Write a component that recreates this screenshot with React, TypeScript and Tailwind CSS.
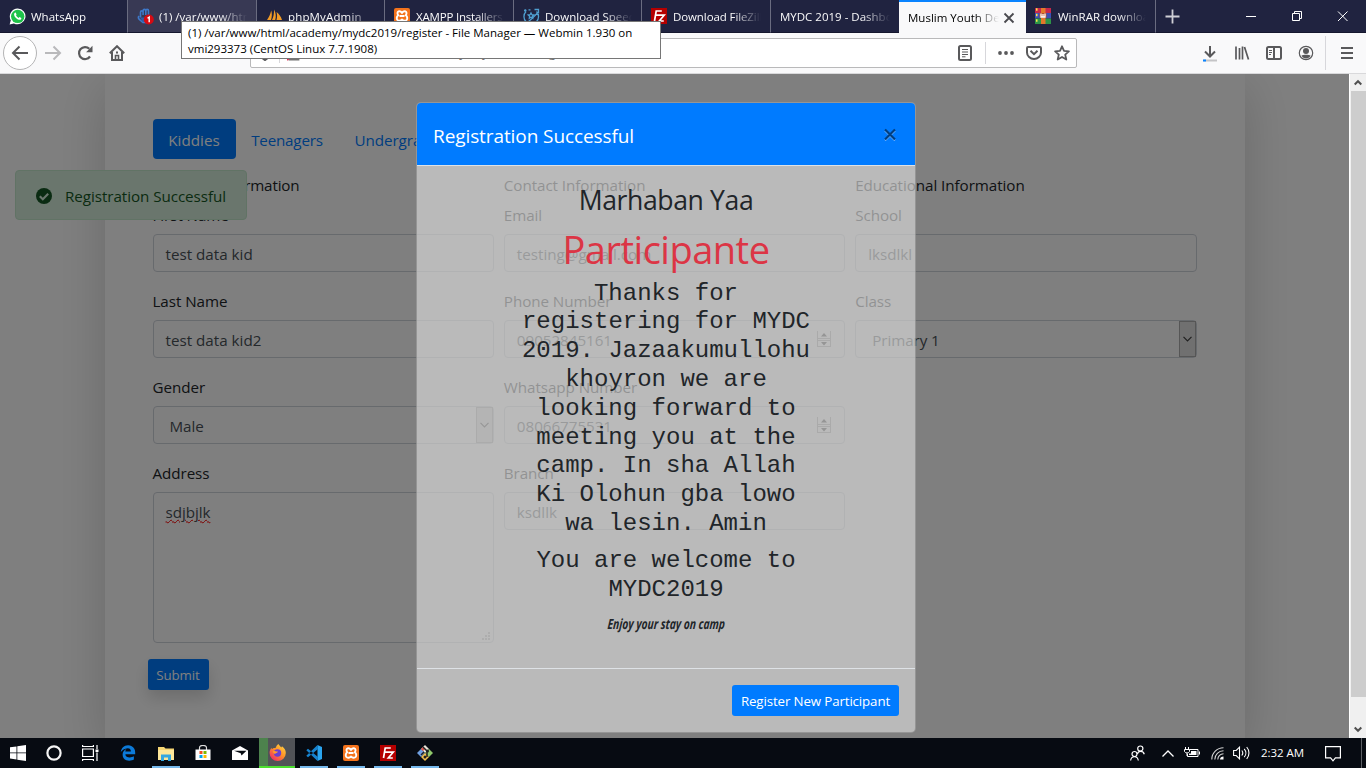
import React from "react";
import { FaEdgeLegacy } from "react-icons/fa";

const XamppIcon = ({ size }: { size: number }) => (
  <svg width={size} height={size} viewBox="0 0 16 16">
    <rect width="16" height="16" rx="2" fill="#f4731c" />
    <path
      d="M4.600 3.400c1.500-.7 2.500.3 3.400 1.400.9-1.100 1.900-2.100 3.400-1.400 1.600.8 1.300 2.500.4 3.900 1.500 1 1.900 3.400.9 4.600-1.200 1.300-3.300 1-4.700-.3-1.400 1.300-3.500 1.600-4.700.3-1-1.200-.6-3.600.9-4.600-.9-1.400-1.200-3.100.4-3.900z"
      fill="none"
      stroke="#fff"
      strokeWidth="1.900"
    />
    <path d="M5.500 8h5" stroke="#fff" strokeWidth="2" />
  </svg>
);

const FileZillaIcon = ({ size }: { size: number }) => (
  <svg width={size} height={size} viewBox="0 0 16 16">
    <rect width="16" height="16" fill="#b50000" />
    <path d="M3.500 13L5.200 3h5.600M4.400 7.200h4.300M8.200 7.200h5L8.300 13h4.500" fill="none" stroke="#fff" strokeWidth="1.700" />
  </svg>
);

const WhatsAppIcon = () => (
  <svg width="17" height="17" viewBox="0 0 17 17">
    <path d="M8.700 .5a7.900 7.900 0 1 1-3.800 14.900L.6 16.500l1.200-4.200A7.900 7.900 0 0 1 8.700.5z" fill="#fff" />
    <circle cx="8.700" cy="8.400" r="6.700" fill="#1fc24a" />
    <path d="M6 4.700c.5-.3.900 0 1.100.7l.4 1c.1.500-.6.900-.5 1.200.5 1 1.400 1.800 2.500 2.300.4.1.8-1 1.200-.8l1.500.8c.4.300-.1 1.500-.8 1.800-1.800.8-5.900-2.100-6.300-5-.1-.8.300-1.700.9-2z" fill="#fff" />
  </svg>
);

const WebminIcon = () => (
  <svg width="17" height="17" viewBox="0 0 17 17">
    <path d="M3.500 9.500V4.200a1.300 1.300 0 0 1 2.600 0V7 2.700a1.300 1.300 0 0 1 2.700 0V7 2.700a1.300 1.300 0 0 1 2.700 0V9M2 8c-1 1-.8 2.400.3 3.300L6 14.500h5" fill="none" stroke="#3e78c9" strokeWidth="1.600" />
    <path d="M3 9.500h9L10 14H6z" fill="#2f5ea8" />
    <circle cx="11.800" cy="11.500" r="5" fill="#d70a12" />
    <path d="M10.500 10.300l1.700-1.200v5.200" fill="none" stroke="#fff" strokeWidth="1.400" />
  </svg>
);

const SailIcon = () => (
  <svg width="17" height="17" viewBox="0 0 17 17">
    <path d="M1 12C3 9 4.500 6 5.200 2.500c1 3 .8 6.500-.2 9.500zM6 12c1.500-3 2.200-6.500 2-10.500 2 3.500 2.300 7 1.200 10.500zM10.500 12c.8-3 .8-5 0-8 2.500 2 4.500 4.500 5.500 8z" fill="#f29b26" />
    <path d="M1 13.500h14" stroke="#b9b9b9" />
  </svg>
);

const SpeedIcon = () => (
  <svg width="17" height="17" viewBox="0 0 17 17" fill="none" stroke="#4f9fd0" strokeWidth="1.300">
    <path d="M13.500 3.500A7.300 7.300 0 1 1 3 3.500M5 14l4-3.500L15.500 4" />
    <path d="M8 5l.9 1.700 1.900.3-1.400 1.300.3 1.900L8 9.300l-1.700.9.3-1.900L5.200 7l1.900-.3z" />
    <path d="M11.500 1.500h4v4M1 2.500h2.500M2.300 1.200v2.600M5.500 1.800h2" />
  </svg>
);

const WinRarIcon = () => (
  <svg width="16" height="16" viewBox="0 0 16 16">
    <rect y="0" width="16" height="5" fill="#c6284a" />
    <rect y="5" width="16" height="5.500" fill="#3d50b4" />
    <rect y="10.500" width="16" height="5.500" fill="#2c9447" />
    <path d="M1 1.500h1.500M1 7h1.500M1 12.500h1.500" stroke="#ffe34d" strokeWidth="2.500" />
    <rect x="6" width="4.500" height="16" fill="#e3792a" />
    <rect x="4.500" y="5" width="7" height="5" rx="1" fill="#b5502a" />
    <path d="M6 5.500v3.500h4V5.500M8 6v3" stroke="#fff" strokeWidth="1.300" fill="none" />
  </svg>
);

type TabProps = {
  label: string;
  icon?: React.ReactNode;
  width: string;
  text?: string;
  first?: boolean;
  hover?: boolean;
};

const Tab = ({ label, icon, width, text = "", first, hover }: TabProps) => (
  <div
    className={`flex h-[33px] shrink-0 items-center overflow-hidden border-b border-b-[#15172e] pr-[9px] ${width} ${
      first ? "pl-[9px]" : "border-l border-l-[#6a6c80] pl-[9px]"
    } ${hover ? "bg-[#383954]" : ""}`}
  >
    {icon && <span className="mr-[5px] w-[17px] shrink-0">{icon}</span>}
    <span className={`min-w-0 flex-1 overflow-hidden whitespace-nowrap pt-0.5 text-[#f9f9fa] [mask-image:linear-gradient(to_right,#000_calc(100%_-_28px),transparent)] ${text}`}>
      {label}
    </span>
  </div>
);

const TabStrip = () => (
  <div className="flex h-[33px] bg-[#202340] text-[11.500px]">
    <Tab first width="w-[127px]" icon={<WhatsAppIcon />} label="WhatsApp" />
    <Tab hover width="w-[129px]" icon={<WebminIcon />} label="(1) /var/www/html/academy" />
    <Tab width="w-[128px]" icon={<SailIcon />} label="phpMyAdmin" text="tracking-[0.15px]" />
    <Tab width="w-[129px]" icon={<XamppIcon size={16} />} label="XAMPP Installers and" text="tracking-[-0.2px]" />
    <Tab width="w-[128px]" icon={<SpeedIcon />} label="Download Speed Test" />
    <Tab width="w-[129px]" icon={<FileZillaIcon size={16} />} label="Download FileZilla Client" text="tracking-[-0.1px]" />
    <Tab width="w-[129px]" label="MYDC 2019 - Dashboard" />
    <div className="flex h-[33px] w-[127px] shrink-0 items-center border-t-2 border-t-[#0a84ff] bg-[#f9f9fa] pb-0.5 pl-[9px] text-black">
      <span className="w-[91px] overflow-hidden whitespace-nowrap pt-0.5 [mask-image:linear-gradient(to_right,#000_calc(100%_-_24px),transparent)]">
        Muslim Youth Development
      </span>
      <svg className="ml-1 mt-0.5" width="12" height="12" viewBox="0 0 12 12">
        <path d="M1.500 1.500l9 9M10.500 1.500l-9 9" stroke="#4a4a4f" strokeWidth="1.800" />
      </svg>
    </div>
    <Tab first width="w-[129px]" icon={<WinRarIcon />} label="WinRAR download free" text="pl-px" />
    <div className="flex h-[33px] w-[73px] shrink-0 items-center border-b border-l border-b-[#15172e] border-l-[#6a6c80] pl-[9px]">
      <svg width="15" height="15" viewBox="0 0 15 15">
        <path d="M7.500 .5v14M.5 7.500h14" stroke="#cfcfd6" strokeWidth="1.800" />
      </svg>
    </div>
    {["M0 5.500h10", "M.5 2.500h7v7h-7zM2.500 2.500v-2h7v7h-2", "M0 .5l9.500 9.500M9.500.5L0 10"].map((d) => (
      <div key={d} className="flex h-[33px] w-[46px] shrink-0 items-center justify-center border-b border-b-[#15172e]">
        <svg width="10" height="10" viewBox="0 0 10 10" fill="none" stroke="#fff" className="overflow-visible">
          <path d={d} />
        </svg>
      </div>
    ))}
  </div>
);

const Slot = ({ w = "w-8", children }: { w?: string; children: React.ReactNode }) => (
  <div className={`flex h-7 shrink-0 items-center justify-center ${w}`}>{children}</div>
);

const stroke = { fill: "none", stroke: "#59595b", strokeWidth: 2 } as const;

const NavBar = () => (
  <div className="flex h-[41px] items-center border-b border-b-[#d9d9db] bg-[#f9f9fa] pl-[3px]">
    <div className="flex size-[34px] shrink-0 items-center justify-center rounded-full border border-[#b4b4b5] bg-white">
      <svg width="18" height="16" viewBox="0 0 18 16" {...stroke}>
        <path d="M17 8H2M8.500 1.500L2 8l6.500 6.500" />
      </svg>
    </div>
    <Slot>
      <svg width="18" height="16" viewBox="0 0 18 16" {...stroke} stroke="#b9b9bb">
        <path d="M1 8h15M9.500 1.500L16 8l-6.500 6.500" />
      </svg>
    </Slot>
    <Slot>
      <svg width="16" height="16" viewBox="0 0 16 16" {...stroke} strokeWidth="2.200">
        <path d="M13 11.500A6 6 0 1 1 12.300 3.800" />
        <path d="M15.500.8v6.400H9.100z" fill="#59595b" stroke="none" />
      </svg>
    </Slot>
    <Slot>
      <svg width="16" height="16" viewBox="0 0 16 16" {...stroke}>
        <path d="M.8 8.300L8 1.200l7.200 7.100M3 7v7.900h10V7" />
        <path d="M6.500 15v-4.500h3V15" strokeWidth="1.600" />
        <path d="M7 6.500h2v2H7z" fill="#59595b" stroke="none" />
      </svg>
    </Slot>
    <div className="ml-[117px] flex h-[30px] w-[827px] shrink-0 items-center rounded-[2px] border border-[#b9b9ba] bg-white">
      <Slot w="w-7">
        <svg width="14" height="15" viewBox="0 0 14 15" {...stroke}>
          <path d="M7 1L1.500 3c0 6 1.500 9 5.500 11 4-2 5.500-5 5.500-11z" />
        </svg>
      </Slot>
      <div className="h-5 w-px bg-[#d7d7db]" />
      <Slot w="w-7">
        <svg className="mt-px" width="14" height="15" viewBox="0 0 14 15">
          <path d="M2.500 7h9v6.500h-9zM4.500 7V4.500a2.500 2.500 0 0 1 5 0V7" fill="none" stroke="#737373" strokeWidth="1.800" />
          <path d="M0 14L12 2" stroke="#e22850" strokeWidth="2" />
        </svg>
      </Slot>
      <div className="w-[643px] shrink-0 whitespace-nowrap pl-[16px] text-[12.800px] text-[#737373]">62.171.140.11/academy/mydc2019/register/</div>
      <Slot w="w-7">
        <svg width="14" height="16" viewBox="0 0 14 16" {...stroke}>
          <rect x="1" y="1" width="12" height="14" rx="1.500" />
          <path d="M4 4.500h6M4 7h6M4 9.500h6M4 11.800h3.500" strokeWidth="1" />
        </svg>
      </Slot>
      <div className="ml-[6px] mr-[6px] h-[22px] w-px bg-[#d7d7db]" />
      <Slot w="w-7">
        <svg width="16" height="4" viewBox="0 0 16 4" fill="#59595b">
          <circle cx="2" cy="2" r="1.900" />
          <circle cx="8" cy="2" r="1.900" />
          <circle cx="14" cy="2" r="1.900" />
        </svg>
      </Slot>
      <Slot w="w-7">
        <svg width="16" height="14" viewBox="0 0 16 14" {...stroke}>
          <path d="M2 1h12c.6 0 1 .4 1 1v4.500a7 6.500 0 0 1-14 0V2c0-.6.400-1 1-1z" />
          <path d="M4.500 4.800L8 8.200l3.500-3.400" />
        </svg>
      </Slot>
      <Slot w="w-7">
        <svg width="16" height="16" viewBox="0 0 16 16" {...stroke} strokeWidth="1.800" strokeLinejoin="round">
          <path d="M8 1.300l2 4.500 4.900.5-3.700 3.300 1.100 4.900L8 12l-4.300 2.500 1.100-4.900L1.100 6.300 6 5.800z" />
        </svg>
      </Slot>
    </div>
    <div className="ml-auto mr-[3px] flex items-center">
      <Slot>
        <svg width="16" height="17" viewBox="0 0 16 17" {...stroke}>
          <path d="M8 1v10M3 6.500l5 5 5-5" />
          <path d="M1.500 15.500H15" stroke="#c4c4c6" />
          <path d="M1 15.500h3" stroke="#0a84ff" />
        </svg>
      </Slot>
      <Slot>
        <svg width="16" height="14" viewBox="0 0 16 14" {...stroke}>
          <path d="M2 .5v13M5.500 2v11.500M8.500 .5v13M10.500 1l4 12.500" strokeWidth="1.700" />
        </svg>
      </Slot>
      <Slot>
        <svg width="16" height="14" viewBox="0 0 16 14" {...stroke}>
          <rect x="1" y="1" width="14" height="12" rx="1.500" />
          <path d="M8 1v12" />
          <path d="M3 4.500h3M3 6.500h3M3 8.500h2" strokeWidth="1" />
        </svg>
      </Slot>
      <Slot>
        <svg width="16" height="16" viewBox="0 0 16 16">
          <circle cx="8" cy="8" r="6.700" fill="none" stroke="#59595b" strokeWidth="1.200" />
          <circle cx="8" cy="6" r="3" fill="#59595b" />
          <path d="M3.500 10.500c1.500-1 7.500-1 9 0-1 2.300-2.500 3-4.500 3s-3.500-.7-4.500-3z" fill="#59595b" />
        </svg>
      </Slot>
      <div className="ml-[3px] mr-[5px] h-[34px] w-px bg-[#d7d7db]" />
      <Slot>
        <svg width="12" height="12" viewBox="0 0 12 12" {...stroke}>
          <path d="M0 1h12M0 6h12M0 11h12" />
        </svg>
      </Slot>
    </div>
  </div>
);

const box = "flex h-[38px] items-center rounded border border-[#ced4da] bg-white text-[#495057]";

const Field = ({ label, children }: { label: string; children: React.ReactNode }) => (
  <div className="mb-4">
    <div className="mb-1.5 h-[26px] leading-[26px]">{label}</div>
    {children}
  </div>
);

const TextBox = ({ value }: { value: string }) => <div className={`${box} px-3 pt-0.5 tracking-normal`}>{value}</div>;

const NumberBox = ({ value }: { value: string }) => (
  <div className={`${box} justify-between px-3`}>
    <span className="pt-0.5 tracking-[-0.03px]">{value}</span>
    <svg className="mr-px" width="14" height="16" viewBox="0 0 14 16">
      <path d="M.5 0v16M13.500 0v16M0 7.500h14M0 9.500h14M0 15.500h14" stroke="#a8a8a8" />
      <path d="M4 5.500L7 2l3 3.500zM4 11l3 3.500 3-3.500z" fill="#333" />
    </svg>
  </div>
);

const SelectBox = ({ value }: { value: string }) => (
  <div className={`${box} justify-between pl-4`}>
    <span className="pt-0.5">{value}</span>
    <span className="flex h-9 w-[17px] items-center justify-center border border-[#adadad] bg-[#e1e1e1]">
      <svg width="9" height="6" viewBox="0 0 9 6" fill="none" stroke="#404040" strokeWidth="1.200">
        <path d="M.5 .8l4 4 4-4" />
      </svg>
    </span>
  </div>
);

const Page = () => (
  <div className="relative h-full w-full overflow-hidden bg-white text-[15.200px] tracking-[-0.06px] text-[#212529]">
    <div className="mx-auto -mt-[3px] h-[667px] w-[1140px] bg-white p-12 shadow-[0_16px_48px_rgba(0,0,0,0.175)]">
      <div className="mb-[13px] flex h-10">
        <div className="flex w-[83px] items-center justify-center rounded bg-[#007bff] pt-[3px] tracking-[0.05px] text-white">Kiddies</div>
        <div className="flex w-[103px] items-center justify-center pt-[3px] tracking-[-0.2px] text-[#007bff]">Teenagers</div>
        <div className="flex items-center pl-4 pt-[3px] text-[#007bff]">Undergraduates</div>
      </div>
      <div className="grid grid-cols-3 gap-[10px]">
        <div>
          <div className="mb-1 h-[26px] leading-[26px] tracking-[-0.15px]">Personal Information</div>
          <Field label="First Name">
            <TextBox value="test data kid" />
          </Field>
          <Field label="Last Name">
            <TextBox value="test data kid2" />
          </Field>
          <Field label="Gender">
            <SelectBox value="Male" />
          </Field>
          <Field label="Address">
            <div className="relative h-[151px] rounded border border-[#ced4da] px-3 pt-[7px] leading-6 text-[#495057]">
              <span className="underline decoration-[#f00] decoration-wavy decoration-1 underline-offset-1">sdjbjlk</span>
              <svg className="absolute bottom-0.5 right-[3px]" width="8" height="8" viewBox="0 0 8 8" fill="#bbb">
                <path d="M6 0h2v2H6zM3 3h2v2H3zM6 3h2v2H6zM0 6h2v2H0zM3 6h2v2H3zM6 6h2v2H6z" />
              </svg>
            </div>
          </Field>
        </div>
        <div>
          <div className="mb-1 h-[26px] leading-[26px]">Contact Information</div>
          <Field label="Email">
            <TextBox value="testing@gmail.com" />
          </Field>
          <Field label="Phone Number">
            <NumberBox value="09052845161" />
          </Field>
          <Field label="Whatsapp Number">
            <NumberBox value="08066775531" />
          </Field>
          <Field label="Branch">
            <TextBox value="ksdllk" />
          </Field>
        </div>
        <div>
          <div className="mb-1 h-[26px] leading-[26px]">Educational Information</div>
          <Field label="School">
            <TextBox value="lksdlkl" />
          </Field>
          <Field label="Class">
            <SelectBox value="Primary 1" />
          </Field>
        </div>
      </div>
      <button className="-ml-[5px] block h-[31px] w-[61px] rounded-[3px] bg-[#007bff] pt-0.5 text-[13.300px] tracking-[-0.1px] text-white shadow-[0_8px_16px_rgba(0,0,0,0.15)]">
        Submit
      </button>
    </div>
  </div>
);

const Toast = () => (
  <div className="absolute left-[15px] top-[96px] flex h-[50px] w-[232px] items-center rounded border border-[#c3e6cb] bg-[#d4edda] pl-5 pt-0.5 text-[15.200px] tracking-[-0.06px] text-[#155724]">
    <svg width="16" height="16" viewBox="0 0 16 16">
      <circle cx="8" cy="8" r="8" fill="#155724" />
      <path d="M3.800 8.300l3 3 5.400-5.500" fill="none" stroke="#d4edda" strokeWidth="2.100" />
    </svg>
    <span className="ml-[13px] whitespace-nowrap">Registration Successful</span>
  </div>
);

const Modal = () => (
  <div className="absolute left-[416px] top-7 flex h-[631px] w-[500px] flex-col overflow-hidden rounded-[5px] border border-black/20 bg-[rgba(219,219,219,0.64)] text-[#212529]">
    <div className="flex h-[63px] shrink-0 items-center justify-between border-b border-[#dee2e6] bg-[#007bff] pl-4 pr-[19px] text-[19px] tracking-[-0.09px] text-white">
      <span className="pt-1">Registration Successful</span>
      <svg width="12" height="13" viewBox="0 0 12 13">
        <path d="M1 2.500l10 10M11 2.500l-10 10" stroke="#7fbdff" strokeWidth="1.800" />
        <path d="M1 1.500l10 10M11 1.500l-10 10" stroke="#003e80" strokeWidth="2.200" />
      </svg>
    </div>
    <div className="flex flex-1 flex-col items-center whitespace-nowrap pt-4 text-center">
      <div className="mb-[7px] pt-[3px] text-[26.600px] leading-[31.600px] tracking-[-0.4px]">Marhaban Yaa</div>
      <div className="mb-2 pt-0.5 text-[38px] leading-[46px] tracking-[-0.5px] text-[#dc3545]">Participante</div>
      <div className="mb-2 font-['Liberation_Mono',monospace] text-[24px] leading-[28.800px]">
        Thanks for
        <br />
        registering for MYDC
        <br />
        2019. Jazaakumullohu
        <br />
        khoyron we are
        <br />
        looking forward to
        <br />
        meeting you at the
        <br />
        camp. In sha Allah
        <br />
        Ki Olohun gba lowo
        <br />
        wa lesin. Amin
      </div>
      <div className="mb-2 font-['Liberation_Mono',monospace] text-[24px] leading-[28.800px]">
        You are welcome to
        <br />
        MYDC2019
      </div>
      <div className="-skew-x-6 scale-x-[0.73] text-[14px] font-bold italic leading-6">Enjoy your stay on camp</div>
    </div>
    <div className="flex h-16 shrink-0 items-center justify-end border-t border-[#dee2e6] pr-4">
      <button className="h-[31px] w-[167px] whitespace-nowrap rounded-[3px] bg-[#007bff] pt-0.5 text-[13.300px] tracking-[-0.12px] text-white">
        Register New Participant
      </button>
    </div>
  </div>
);

const ScrollBar = () => (
  <div className="flex w-[17px] shrink-0 flex-col items-center border-l border-white bg-[#f0f0f0]">
    <svg className="h-[17px]" width="8" height="6" viewBox="0 0 8 6" fill="none" stroke="#505050" strokeWidth="2">
      <path d="M.7 5L4 1.700 7.300 5" />
    </svg>
    <div className="h-[606px] w-[15px] bg-[#cdcdcd]" />
    <svg className="mt-auto h-[17px]" width="8" height="6" viewBox="0 0 8 6" fill="none" stroke="#505050" strokeWidth="2">
      <path d="M.7 1L4 4.300 7.300 1" />
    </svg>
  </div>
);

const TaskItem = ({ open, w, children }: { open?: boolean; w: string; children: React.ReactNode }) => (
  <div className={`flex h-[30px] shrink-0 flex-col items-center ${w}`}>
    <div className="flex h-7 items-center pt-0.5">{children}</div>
    {open && <div className="h-0.5 w-7 bg-[#76b9ed]" />}
  </div>
);

const TaskBar = () => (
  <div className="flex h-[30px] bg-[#070b12]">
    <TaskItem w="w-9">
      <svg width="16" height="16" viewBox="0 0 16 16" fill="#fff">
        <path d="M0 2.300L6.500 1.400v6.100H0zM7.300 1.300L16 0v7.500H7.300zM0 8.300h6.500v6.200L0 13.600zM7.300 8.300H16V16l-8.700-1.300z" />
      </svg>
    </TaskItem>
    <TaskItem w="w-9">
      <svg width="16" height="16" viewBox="0 0 16 16">
        <circle cx="8" cy="8" r="6.600" fill="none" stroke="#f5f5f5" strokeWidth="2.200" />
      </svg>
    </TaskItem>
    <TaskItem w="w-9">
      <svg width="17" height="16" viewBox="0 0 17 16" fill="none" stroke="#fff" strokeWidth="1.200">
        <path d="M.6 4h10.800v7.500H.6zM.6 0v1.500h10.800V0M.6 16v-1.500h10.800V16M15 0v4M15 7.500V16" />
        <path d="M13.500 4.500h3v2.500h-3z" fill="#fff" stroke="none" />
      </svg>
    </TaskItem>
    <TaskItem w="w-10">
      <FaEdgeLegacy size={16} color="#0c7ad8" />
    </TaskItem>
    <TaskItem open w="w-9">
      <svg width="16" height="15" viewBox="0 0 16 15">
        <path d="M0 1h6l1.500 1.500H16V14H0z" fill="#f7d774" />
        <path d="M0 4h16v10H0z" fill="#fde79a" />
        <path d="M3 15V8.500h10V15h-3v-3.500H6V15z" fill="#34a7e0" />
      </svg>
    </TaskItem>
    <TaskItem w="w-[37px]">
      <svg width="16" height="16" viewBox="0 0 16 16">
        <path d="M4.500 5V3a3.500 2.500 0 0 1 7 0v2" fill="none" stroke="#ddd" strokeWidth="1.200" />
        <path d="M.5 4.500h15V15h-15z" fill="#fff" />
        <path d="M4.500 6h3v3h-3z" fill="#f25022" />
        <path d="M8.500 6h3v3h-3z" fill="#7fba00" />
        <path d="M4.500 10h3v3h-3z" fill="#00a4ef" />
        <path d="M8.500 10h3v3h-3z" fill="#ffb900" />
      </svg>
    </TaskItem>
    <TaskItem w="w-[38px]">
      <svg width="16" height="14" viewBox="0 0 16 14">
        <path d="M0 4.500L8 0l8 4.500V14H0z" fill="#fff" />
        <path d="M2 4.800h12.500L9.500 9.500l-.800-2.200z" fill="#070b12" />
      </svg>
    </TaskItem>
    <div className="flex h-[30px] w-9 shrink-0 items-center justify-center border-b-2 border-b-[#4ce02f] bg-[linear-gradient(to_right,#4d824d_9px,#515357_9px)]">
      <svg width="17" height="17" viewBox="0 0 17 17">
        <defs>
          <linearGradient id="flame" x1="1" y1="0" x2="0.200" y2="1">
            <stop offset="0" stopColor="#ffe14a" />
            <stop offset=".5" stopColor="#ff9326" />
            <stop offset="1" stopColor="#f0276a" />
          </linearGradient>
        </defs>
        <path d="M9.500 0c.5 1.500 2 2.300 2.800 3.600l.700-1.300c2.500 1.700 3.800 4 3.800 6.700A8 7.900 0 0 1 .6 9c0-2.200.6-3.700 1.900-5.300l.400 1.500C4 4 5 3.800 6.500 4 7 2.500 8 1 9.500 0z" fill="url(#flame)" />
        <circle cx="8.500" cy="9" r="3.700" fill="#6b3fd0" />
        <path d="M4 7c2-.5 3 .8 5 .5-.7 1.700-2 1.200-3 2.500C4.500 9.500 4 8.500 4 7z" fill="#ff9a2b" />
      </svg>
    </div>
    <TaskItem open w="w-[38px]">
      <svg width="16" height="16" viewBox="0 0 16 16">
        <path d="M11.500 0L16 2v12l-4.500 2z" fill="#2aa5ef" />
        <path d="M12 4L2 12.200.3 10.800 11.500 0zM12 12L2 3.800.3 5.200 11.500 16z" fill="#1683cf" />
      </svg>
    </TaskItem>
    <TaskItem open w="w-9">
      <XamppIcon size={16} />
    </TaskItem>
    <TaskItem open w="w-[38px]">
      <FileZillaIcon size={16} />
    </TaskItem>
    <TaskItem open w="w-9">
      <svg width="16" height="16" viewBox="0 0 16 16">
        <path d="M8 0l4 4-4 4-4-4z" fill="#e9e4d8" />
        <path d="M4 4l4 4-4 4-4-4z" fill="#6f9fe0" />
        <path d="M12 4l4 4-4 4-4-4z" fill="#8fc96b" />
        <path d="M8 8l4 4-4 4-4-4z" fill="#f3c04b" />
        <path d="M4 4l2-2 2 2-2 2z" fill="#e0534a" />
        <path d="M6 2l4 4v6M7 7l-3 3" stroke="#222" strokeWidth="1.500" fill="none" />
        <circle cx="10.500" cy="6" r="1.500" fill="#222" />
        <circle cx="8" cy="12" r="1.500" fill="#222" />
      </svg>
    </TaskItem>
    <div className="ml-auto flex items-center text-white">
      <svg className="mr-[17px]" width="15" height="16" viewBox="0 0 15 16" fill="none" stroke="#fff" strokeWidth="1.200">
        <circle cx="10.300" cy="3.600" r="2.600" />
        <path d="M7.500 9c.5-3.200 5.500-3.800 6.800.3" />
        <circle cx="4.500" cy="9" r="2.500" />
        <path d="M.6 15.500c.7-5 7-5 7.700 0" />
      </svg>
      <svg className="mr-[10px]" width="12" height="7" viewBox="0 0 12 7" fill="none" stroke="#fff" strokeWidth="1.300">
        <path d="M.5 6.500L6 1l5.500 5.500" />
      </svg>
      <svg className="mr-[11px]" width="16" height="12" viewBox="0 0 16 12" fill="none" stroke="#fff">
        <path d="M5.500 2.500h8.500v7H3.500V7M15.500 4.500v3" />
        <path d="M7 4h5.500v4H5V6.500h2z" fill="#fff" stroke="none" />
        <path d="M1.500 0v2.500M4.500 0v2.500M.5 2.500h5v2c-1 2-4 2-5 0zM3 6v3" />
      </svg>
      <svg className="mr-[9px]" width="13" height="13" viewBox="0 0 13 13" fill="none" stroke="#d5d5d5">
        <path d="M.8 12.500A11.700 11.700 0 0 1 12.500.8M3.800 12.500a8.700 8.700 0 0 1 8.700-8.700M6.800 12.500a5.700 5.700 0 0 1 5.700-5.700" strokeWidth="1.100" />
        <path d="M9 12.500c0-2 1.500-3 3.500-3v3z" fill="#fff" stroke="none" />
      </svg>
      <svg className="mr-[11px]" width="17" height="14" viewBox="0 0 17 14" fill="none" stroke="#fff" strokeWidth="1.100">
        <path d="M.6 4.500h2.600L6.500 1.200v11.600L3.200 9.500H.6zM8.800 4.500c1.200 1.500 1.200 3.500 0 5M11.200 2.800c2.200 2.500 2.200 6 0 8.400M13.700 1c3 3.500 3 8.500 0 12" />
      </svg>
      <span className="w-[45px] whitespace-nowrap text-[11.500px] tracking-[-0.050px]">2:32 AM</span>
      <svg className="ml-[19px] mt-0.5" width="16" height="16" viewBox="0 0 16 16" fill="none" stroke="#fff" strokeWidth="1.200">
        <path d="M.6 .6h14.800v11.200h-5L8 14.800l-2.400-3H.6z" />
      </svg>
      <div className="ml-[20px] mr-1 h-[30px] w-px bg-[#5c5f64]" />
    </div>
  </div>
);

export default function App() {
  return (
    <div className="relative flex h-[768px] w-[1366px] flex-col overflow-hidden bg-white font-['Open_Sans','Noto_Sans',sans-serif]">
      <TabStrip />
      <NavBar />
      <div className="flex h-[664px]">
        <div className="relative w-[1349px] shrink-0 overflow-hidden">
          <Page />
          <Toast />
          <div className="absolute inset-0 bg-black/50" />
          <Modal />
        </div>
        <ScrollBar />
      </div>
      <TaskBar />
      <div className="absolute left-[181px] top-[21px] h-[38px] w-[480px] whitespace-nowrap border border-[#767676] bg-white pl-1.5 pt-[3px] text-[11.500px] leading-4 text-black">
        (1) /var/www/html/academy/mydc2019/register - File Manager — Webmin 1.930 on
        <br />
        vmi293373 (CentOS Linux 7.7.1908)
      </div>
    </div>
  );
}
